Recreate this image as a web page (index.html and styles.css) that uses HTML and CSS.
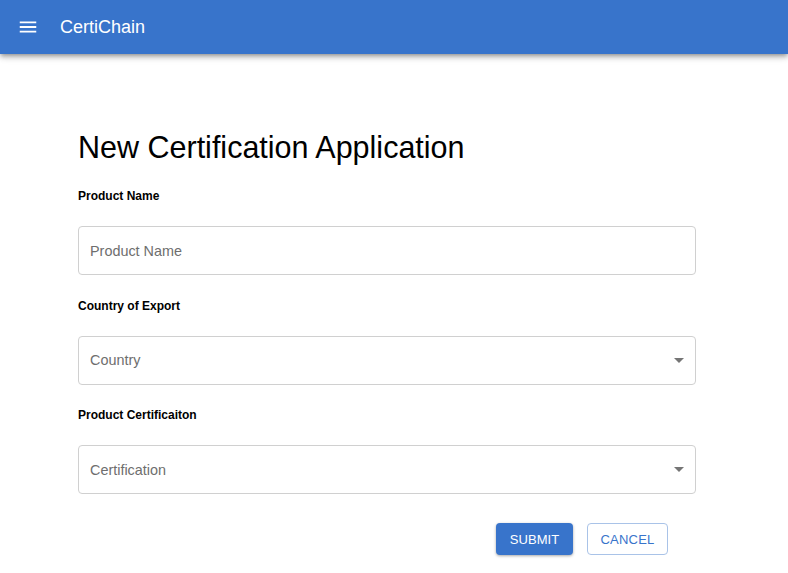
FILE: index.html
```html
<!DOCTYPE html>
<html lang="en">
<head>
<meta charset="utf-8">
<title>CertiChain</title>
<link rel="stylesheet" href="styles.css">
</head>
<body>
<header class="appbar">
  <svg class="menu-icon" viewBox="0 0 24 24" aria-hidden="true"><path d="M3 18h18v-2H3v2zm0-5h18v-2H3v2zm0-7v2h18V6H3z"/></svg>
  <span class="brand">CertiChain</span>
</header>
<main class="content">
  <h1 class="title">New Certification Application</h1>
  <form class="form">
    <label class="label">Product Name</label>
    <div class="field"><span class="placeholder">Product Name</span></div>
    <label class="label">Country of Export</label>
    <div class="field"><span class="placeholder">Country</span><svg class="caret" viewBox="0 0 10 5" aria-hidden="true"><path d="M0 0h10L5 5z"/></svg></div>
    <label class="label">Product Certificaiton</label>
    <div class="field"><span class="placeholder">Certification</span><svg class="caret" viewBox="0 0 10 5" aria-hidden="true"><path d="M0 0h10L5 5z"/></svg></div>
    <div class="actions">
      <button type="button" class="btn btn-primary">SUBMIT</button>
      <button type="button" class="btn btn-outline">CANCEL</button>
    </div>
  </form>
</main>
</body>
</html>
```
FILE: styles.css
```css
* { box-sizing: border-box; }
html, body { margin: 0; height: 100%; }
body {
  background: #fff;
  font-family: "Liberation Sans", Arial, sans-serif;
  color: #000;
  overflow: hidden;
}
.appbar {
  height: 54px;
  background: #3874cb;
  color: #fff;
  display: flex;
  align-items: center;
  padding-left: 17px;
  box-shadow: 0 2px 4px -1px rgba(0,0,0,.3), 0 4px 5px rgba(0,0,0,.14), 0 1px 10px rgba(0,0,0,.12);
}
.menu-icon { width: 22px; height: 22px; fill: #fff; flex: none; }
.brand { margin-left: 21px; font-size: 18px; line-height: 24px; margin-top: -1px; }
.content { padding: 72px 92px 0 78px; }
.title { margin: 0; font-size: 30.5px; font-weight: 400; line-height: 42px; }
.form { display: flex; flex-direction: column; }
.label {
  font-size: 12px;
  font-weight: 700;
  line-height: 16px;
  margin-top: 20px;
}
.field + .label { margin-top: 22.5px; }
.field {
  height: 49px;
  margin-top: 22px;
  border: 1px solid #d0d0d0;
  border-radius: 4px;
  display: flex;
  align-items: center;
  justify-content: space-between;
  padding: 0 11px;
}
.placeholder { font-size: 14.4px; color: #6e6e6e; }
.caret { width: 10px; height: 5px; fill: #757575; }
.actions {
  display: flex;
  justify-content: flex-end;
  gap: 14px;
  margin-top: 29px;
  padding-right: 28px;
}
.btn {
  height: 32px;
  border-radius: 4px;
  font-family: inherit;
  font-size: 13px;
  letter-spacing: .2px;
  padding: 0;
}
.btn-primary {
  width: 77px;
  background: #3874cb;
  color: #fff;
  border: 0;
  letter-spacing: .1px;
  box-shadow: 0 1px 3px rgba(0,0,0,.35);
}
.btn-outline {
  width: 81px;
  background: #fff;
  color: #3874cb;
  border: 1px solid #a9c3e8;
}
```
